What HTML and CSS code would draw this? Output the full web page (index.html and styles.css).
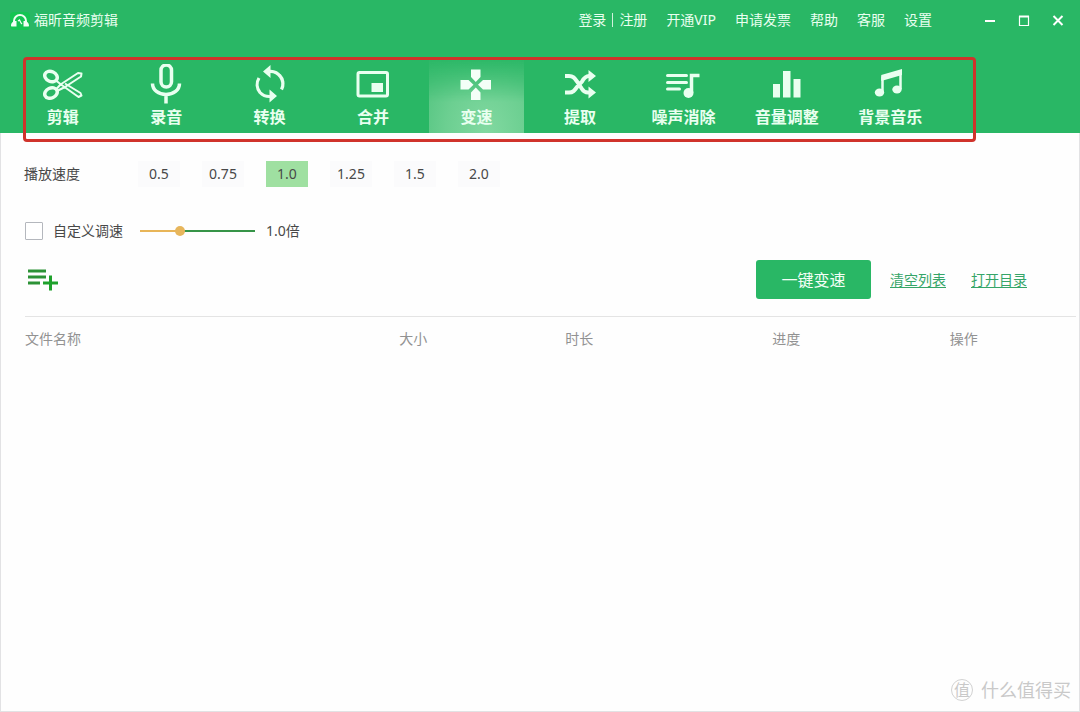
FILE: index.html
```html
<!DOCTYPE html>
<html lang="zh-CN">
<head>
<meta charset="utf-8">
<meta name="viewport" content="width=device-width, initial-scale=1">
<title>福昕音频剪辑</title>
<link rel="stylesheet" href="styles.css">
</head>
<body>
<div class="app">
  <header class="header">
    <div class="titlebar">
      <div class="brand">
        <svg class="brand-logo" viewBox="0 0 20 20" aria-hidden="true">
          <rect x="0" y="2" width="20" height="18" rx="4" fill="#14c552"/>
          <path d="M4 15V11a6 6 0 0 1 12 0V15" fill="none" stroke="#f0fff4" stroke-width="2"/>
          <path d="M1 16c0-3.500 2-5 5.500-5v5.500H1.500zM19 16c0-3.500-2-5-5.500-5v5.500h5z" fill="#f0fff4"/>
          <path d="M8 11l1.500-1 1.500 3 1 1" fill="none" stroke="#f0fff4" stroke-width="1.200"/>
        </svg>
        <h1 class="brand-name">福昕音频剪辑</h1>
      </div>
      <nav class="menu" aria-label="菜单">
        <span class="account"><a href="#">登录</a><span class="divider"></span><a href="#">注册</a></span>
        <a href="#">开通VIP</a>
        <a href="#">申请发票</a>
        <a href="#">帮助</a>
        <a href="#">客服</a>
        <a href="#">设置</a>
      </nav>
      <div class="window-controls">
        <button type="button" aria-label="最小化"><svg viewBox="0 0 12 12"><path d="M1 7h10" stroke-width="2"/></svg></button>
        <button type="button" aria-label="最大化"><svg viewBox="0 0 12 12"><path d="M1.500 2v9.500h9V2" stroke-width="1.200"/><path d="M1 2.500h10" stroke-width="2"/></svg></button>
        <button type="button" aria-label="关闭"><svg viewBox="0 0 12 12"><path d="M1.500 2l9 9M10.500 2l-9 9" stroke-width="2"/></svg></button>
      </div>
    </div>
    <nav class="tabs" aria-label="功能">
      <button type="button" class="tab">
        <svg class="tab-icon" viewBox="0 0 40 40"><g fill="none" stroke="#e9fff0"><ellipse cx="8" cy="12.500" rx="6.500" ry="5" transform="rotate(25 8 12.500)" stroke-width="3.500"/><ellipse cx="8" cy="29" rx="6.500" ry="5" transform="rotate(-25 8 29)" stroke-width="3.500"/><path d="M13 16.500l5 4 17.500 12.500 3-1.500-1-2.500L22 19.500M13 25.500l4.500-5L35 9l3.500.5-.5 3L22 23l-8 4" stroke-width="2" stroke-linejoin="round"/></g></svg>
        <span>剪辑</span>
      </button>
      <button type="button" class="tab">
        <svg class="tab-icon" viewBox="0 0 40 40"><g fill="none" stroke="#e9fff0" stroke-width="3.500"><rect x="15" y="1" width="10.500" height="22" rx="5.250"/><path d="M6.500 19.500c0 6.500 6 11 13.500 11s13.500-4.500 13.500-11M20 30v9.500"/></g></svg>
        <span>录音</span>
      </button>
      <button type="button" class="tab">
        <svg class="tab-icon" viewBox="0 0 40 40"><path d="M10 28.500A12.500 12.500 0 0 1 9 14M19 7.500a12.500 12.500 0 0 1 12.500 18M20 32.500a13 13 0 0 1-10-4M29.500 11a12.500 12.500 0 0 1 2 14.500" fill="none" stroke="#e9fff0" stroke-width="3.200"/><path d="M20.500 1v13L13 7.500zM19.500 25.500v13l7.500-6.500z" fill="#e9fff0"/></svg>
        <span>转换</span>
      </button>
      <button type="button" class="tab">
        <svg class="tab-icon" viewBox="0 0 40 40"><rect x="5" y="8.500" width="29.500" height="23.500" rx="1.500" fill="none" stroke="#e9fff0" stroke-width="3"/><path d="M18.500 19h11.500v9H18.500z" fill="#e9fff0"/></svg>
        <span>合并</span>
      </button>
      <button type="button" class="tab tab-active" aria-current="page">
        <svg class="tab-icon" viewBox="0 0 40 40"><path d="M15 5.500h9.500v7.500L19.750 18 15 13zM15 36h9.500v-7.500L19.750 23.500 15 28.500zM4.500 16v9.500h8l5-4.750-5-4.750zM35 16v9.500h-8l-5-4.750 5-4.750z" fill="#f4fff7"/></svg>
        <span>变速</span>
      </button>
      <button type="button" class="tab">
        <svg class="tab-icon" viewBox="0 0 40 40"><path d="M5 12h4c4 0 5.500 2 8 5.500l5 7.500c1.500 2.500 3 3.500 6 3.500h1M5 28.500h4c4 0 5.500-2 8-5.500l5-5.500c2-3.500 3.500-5.500 7-5.500h1" fill="none" stroke="#e9fff0" stroke-width="4"/><path d="M28.500 6v12l7.500-6zM28.500 22.500v12l7.500-6z" fill="#e9fff0"/></svg>
        <span>提取</span>
      </button>
      <button type="button" class="tab">
        <svg class="tab-icon" viewBox="0 0 40 40"><path d="M4.500 11.500h19M4.500 18.500h19M4.500 25h12" stroke="#e9fff0" stroke-width="3" stroke-linecap="round"/><path d="M28.500 29V11.500h8" fill="none" stroke="#e9fff0" stroke-width="3.500"/><circle cx="25.500" cy="29" r="5" fill="#e9fff0"/></svg>
        <span>噪声消除</span>
      </button>
      <button type="button" class="tab">
        <svg class="tab-icon" viewBox="0 0 40 40"><path d="M6 20h7v13.500H6zM16 7h7.500v26.500H16zM26.500 15h7v18.500h-7z" fill="#e9fff0"/></svg>
        <span>音量调整</span>
      </button>
      <button type="button" class="tab">
        <svg class="tab-icon" viewBox="0 0 40 40"><path d="M12.500 28.500V13.500L30.500 8v17" fill="none" stroke="#e9fff0" stroke-width="2.500"/><path d="M11.250 11L32 5v6l-20.750 6z" fill="#e9fff0"/><ellipse cx="9.500" cy="28.500" rx="4.700" ry="4" fill="#e9fff0"/><ellipse cx="27" cy="25.500" rx="4.700" ry="4" fill="#e9fff0"/></svg>
        <span>背景音乐</span>
      </button>
    </nav>
    <div class="highlight" aria-hidden="true"></div>
  </header>

  <main class="content">
    <section class="speed" aria-label="播放速度">
      <span class="speed-label">播放速度</span>
      <div class="speed-options">
        <button type="button" class="speed-option">0.5</button>
        <button type="button" class="speed-option">0.75</button>
        <button type="button" class="speed-option speed-selected" aria-pressed="true">1.0</button>
        <button type="button" class="speed-option">1.25</button>
        <button type="button" class="speed-option">1.5</button>
        <button type="button" class="speed-option">2.0</button>
      </div>
    </section>

    <section class="custom">
      <input class="custom-check" type="checkbox" id="custom-speed">
      <label for="custom-speed">自定义调速</label>
      <input class="custom-range" type="range" min="0.5" max="2" step="0.1" value="1" aria-label="速度" id="speed-range">
      <output for="speed-range">1.0倍</output>
    </section>

    <section class="actions">
      <button type="button" class="add" aria-label="添加文件">
        <svg viewBox="0 0 34 24"><path d="M2 3h18M2 9h18M2 15h12" stroke="#2c9236" stroke-width="3"/><path d="M17 15h15M24.500 7.500v15" stroke="#1fa12c" stroke-width="3"/></svg>
      </button>
      <button type="button" class="primary">一键变速</button>
      <a class="link" href="#">清空列表</a>
      <a class="link" href="#">打开目录</a>
    </section>

    <div class="files">
      <table class="file-table">
        <thead>
          <tr>
            <th class="col-name" scope="col">文件名称</th>
            <th class="col-size" scope="col">大小</th>
            <th class="col-length" scope="col">时长</th>
            <th class="col-progress" scope="col">进度</th>
            <th scope="col">操作</th>
          </tr>
        </thead>
        <tbody></tbody>
      </table>
    </div>
  </main>

  <div class="watermark"><span class="watermark-badge">值</span><span>什么值得买</span></div>
</div>
</body>
</html>
```

FILE: styles.css
```css
* {
  box-sizing: border-box;
}

body {
  margin: 0;
  background: #fefefe;
  color: #484848;
  font: 14px/20px "Noto Sans", "Noto Sans CJK SC", sans-serif;
}

button {
  padding: 0;
  border: 0;
  background: none;
  color: inherit;
  font: inherit;
  cursor: pointer;
}

svg {
  display: block;
}

.app {
  position: relative;
  display: flex;
  flex-direction: column;
  min-height: 100vh;
  border: solid #e2e2e4;
  border-width: 0 1px 1px;
}

/* Header */

.header {
  position: relative;
  margin: 0 -1px;
  background: #29b765;
  color: #e9fff0;
}

.titlebar {
  display: flex;
  align-items: center;
  height: 40px;
  padding: 0 5px 0 10px;
}

.brand {
  display: flex;
  align-items: center;
  gap: 4px;
  margin-right: auto;
}

.brand-logo {
  width: 20px;
  height: 20px;
}

.brand-name {
  margin: 0;
  font-size: 14px;
  font-weight: 400;
}

.menu {
  display: flex;
  gap: 19px;
  margin-right: 41px;
}

.menu a {
  color: inherit;
  text-decoration: none;
}

.account {
  display: flex;
  align-items: center;
}

.divider {
  width: 1px;
  height: 14px;
  margin: 0 6px;
  background: #d0f2dc;
}

.window-controls {
  display: flex;
}

.window-controls button {
  display: grid;
  place-items: center;
  width: 34px;
  height: 40px;
}

.window-controls svg {
  width: 12px;
  height: 12px;
  fill: none;
  stroke: #fff;
}

.tabs {
  display: grid;
  grid-template-columns: repeat(9, 1fr);
  gap: 8px;
  max-width: 938px;
  padding: 16px 0 0 15px;
}

.tab {
  display: flex;
  flex-direction: column;
  align-items: center;
  gap: 2px;
  padding: 8px 0 5px;
  font-size: 16px;
  font-weight: 700;
  white-space: nowrap;
}

.tab-icon {
  width: 40px;
  height: 40px;
}

.tab span {
  line-height: 22px;
}

.tab-active {
  background:
    linear-gradient(180deg, #29b765 0%, #29b76500 60%),
    radial-gradient(ellipse at 60% 100%, #82d9a1 0%, #6ccf91 50%, #4cc17b 100%);
}

.highlight {
  position: absolute;
  top: 57px;
  right: 104px;
  bottom: -9px;
  left: 23px;
  border: 3px solid #d0332b;
  border-radius: 4px;
  pointer-events: none;
}

/* Speed settings */

.content {
  padding-top: 28px;
}

.speed {
  display: flex;
  align-items: center;
  padding-left: 23px;
}

.speed-label {
  width: 114px;
}

.speed-options {
  display: flex;
  gap: 22px;
}

.speed-option {
  min-width: 42px;
  height: 26px;
  padding: 0 6px;
  background: #fbfbfc;
}

.speed-selected {
  background: #9fe0a1;
}

.custom {
  display: flex;
  align-items: center;
  margin-top: 34px;
  padding-left: 24px;
}

.custom-check {
  width: 18px;
  height: 18px;
  margin: 0 10px 0 0;
  border: 1px solid #b4b7bd;
  border-radius: 1px;
  background: #fff;
  appearance: none;
}

.custom-check:checked {
  background: #29b765;
}

.custom-range {
  width: 115px;
  height: 20px;
  margin: 0 11px 0 17px;
  background: linear-gradient(90deg, #e8b558 34%, #369448 34%) center / 100% 2px no-repeat;
  appearance: none;
}

.custom-range::-webkit-slider-thumb {
  width: 10px;
  height: 10px;
  border-radius: 50%;
  background: #e7b65c;
  appearance: none;
}

/* Actions */

.actions {
  display: flex;
  align-items: center;
  gap: 25px;
  padding: 19px 52px 17px 25px;
}

.add {
  margin-right: auto;
}

.add svg {
  width: 34px;
  height: 24px;
}

.primary {
  width: 115px;
  height: 39px;
  margin-right: -6px;
  border-radius: 3px;
  background: #29b765;
  color: #f4fff7;
  font-size: 16px;
}

.link {
  color: #35a568;
  text-underline-offset: 2px;
}

/* File list */

.files {
  margin: 0 3px 0 24px;
  border-top: 1px solid #e4e4e4;
}

.file-table {
  width: 100%;
  border-collapse: collapse;
  table-layout: fixed;
}

.file-table th {
  padding: 12px 0;
  color: #929292;
  font-weight: 400;
  text-align: left;
}

.col-name {
  width: 35.6%;
}

.col-size {
  width: 15.8%;
}

.col-length {
  width: 19.7%;
}

.col-progress {
  width: 16.9%;
}

.watermark {
  position: absolute;
  right: 8px;
  bottom: 9px;
  display: flex;
  align-items: center;
  gap: 8px;
  color: #c9c9c9;
  font-size: 18px;
  line-height: 24px;
}

.watermark-badge {
  width: 22px;
  height: 22px;
  border: 1px solid #d2d2d2;
  border-radius: 50%;
  font-size: 16px;
  line-height: 20px;
  text-align: center;
}
```
